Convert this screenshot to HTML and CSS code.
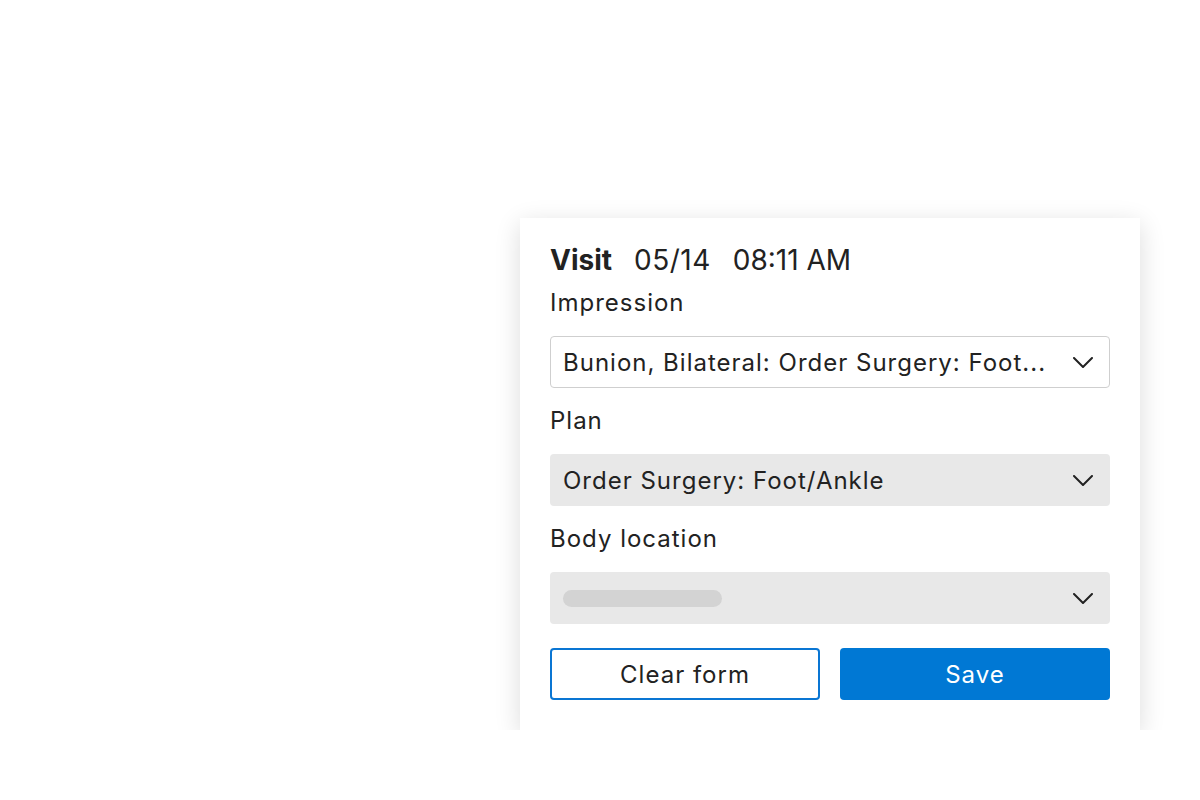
FILE: index.html
```html
<!DOCTYPE html>
<html lang="en">
<head>
<meta charset="utf-8">
<title>Visit</title>
<link rel="stylesheet" href="styles.css">
</head>
<body>
<main class="stage">
  <section class="card">
    <h1 class="title"><strong>Visit</strong><span class="date">05/14</span><span class="time">08:11 AM</span></h1>

    <div class="field">
      <div class="label">Impression</div>
      <div class="select outlined">
        <span class="value">Bunion, Bilateral: Order Surgery: Foot...</span>
        <svg class="chev" viewBox="0 0 20 11" width="20" height="11"><path d="M1 1l9 9 9-9" fill="none" stroke="#222" stroke-width="2" stroke-linecap="round" stroke-linejoin="round"/></svg>
      </div>
    </div>

    <div class="field">
      <div class="label">Plan</div>
      <div class="select filled">
        <span class="value">Order Surgery: Foot/Ankle</span>
        <svg class="chev" viewBox="0 0 20 11" width="20" height="11"><path d="M1 1l9 9 9-9" fill="none" stroke="#222" stroke-width="2" stroke-linecap="round" stroke-linejoin="round"/></svg>
      </div>
    </div>

    <div class="field">
      <div class="label">Body location</div>
      <div class="select filled">
        <span class="skeleton"></span>
        <svg class="chev" viewBox="0 0 20 11" width="20" height="11"><path d="M1 1l9 9 9-9" fill="none" stroke="#222" stroke-width="2" stroke-linecap="round" stroke-linejoin="round"/></svg>
      </div>
    </div>

    <div class="actions">
      <button class="btn secondary">Clear form</button>
      <button class="btn primary">Save</button>
    </div>
  </section>
</main>
</body>
</html>
```

FILE: styles.css
```css
* { box-sizing: border-box; }
html, body { margin: 0; padding: 0; background: #fff; }
body {
  font-family: Inter, "Noto Sans", "Liberation Sans", sans-serif;
  color: #222;
}
.stage {
  padding: 218px 0 0 520px;
}
.card {
  width: 620px;
  background: #fff;
  padding: 24px 30px 30px;
  box-shadow: 0 6px 24px rgba(0, 0, 0, 0.14);
}
.title {
  margin: 0 0 10px;
  font-size: 28px;
  line-height: 36px;
  font-weight: 400;
  color: #222;
}
.title strong { font-weight: 700; }
.title .date { margin-left: 22px; letter-spacing: 0.5px; }
.title .time { margin-left: 22px; }
.field + .field { margin-top: 18px; }
.label {
  font-size: 24px;
  line-height: 30px;
  letter-spacing: 1px;
  margin-bottom: 18px;
}
.select {
  height: 52px;
  border-radius: 4px;
  display: flex;
  align-items: center;
  justify-content: space-between;
  padding: 0 17px 0 13px;
  font-size: 24px;
  letter-spacing: 1px;
}
.select.outlined {
  border: 1px solid #cfcfcf;
  background: #fff;
  padding-left: 12px;
  padding-right: 16px;
}
.select.filled { background: #e8e8e8; }
.value { white-space: nowrap; }
.chev { flex: none; display: block; }
.skeleton {
  width: 159px;
  height: 17px;
  border-radius: 9px;
  background: #d3d3d3;
}
.actions {
  margin-top: 24px;
  display: grid;
  grid-template-columns: repeat(2, minmax(0, 1fr));
  gap: 20px;
}
.btn {
  height: 52px;
  padding: 0;
  border-radius: 4px;
  font-family: inherit;
  font-size: 24px;
  letter-spacing: 1px;
  cursor: pointer;
}
.btn.secondary {
  background: #fff;
  color: #222;
  border: 2px solid #0a76d3;
}
.btn.primary {
  background: #0078d4;
  color: #fff;
  border: none;
}
```
